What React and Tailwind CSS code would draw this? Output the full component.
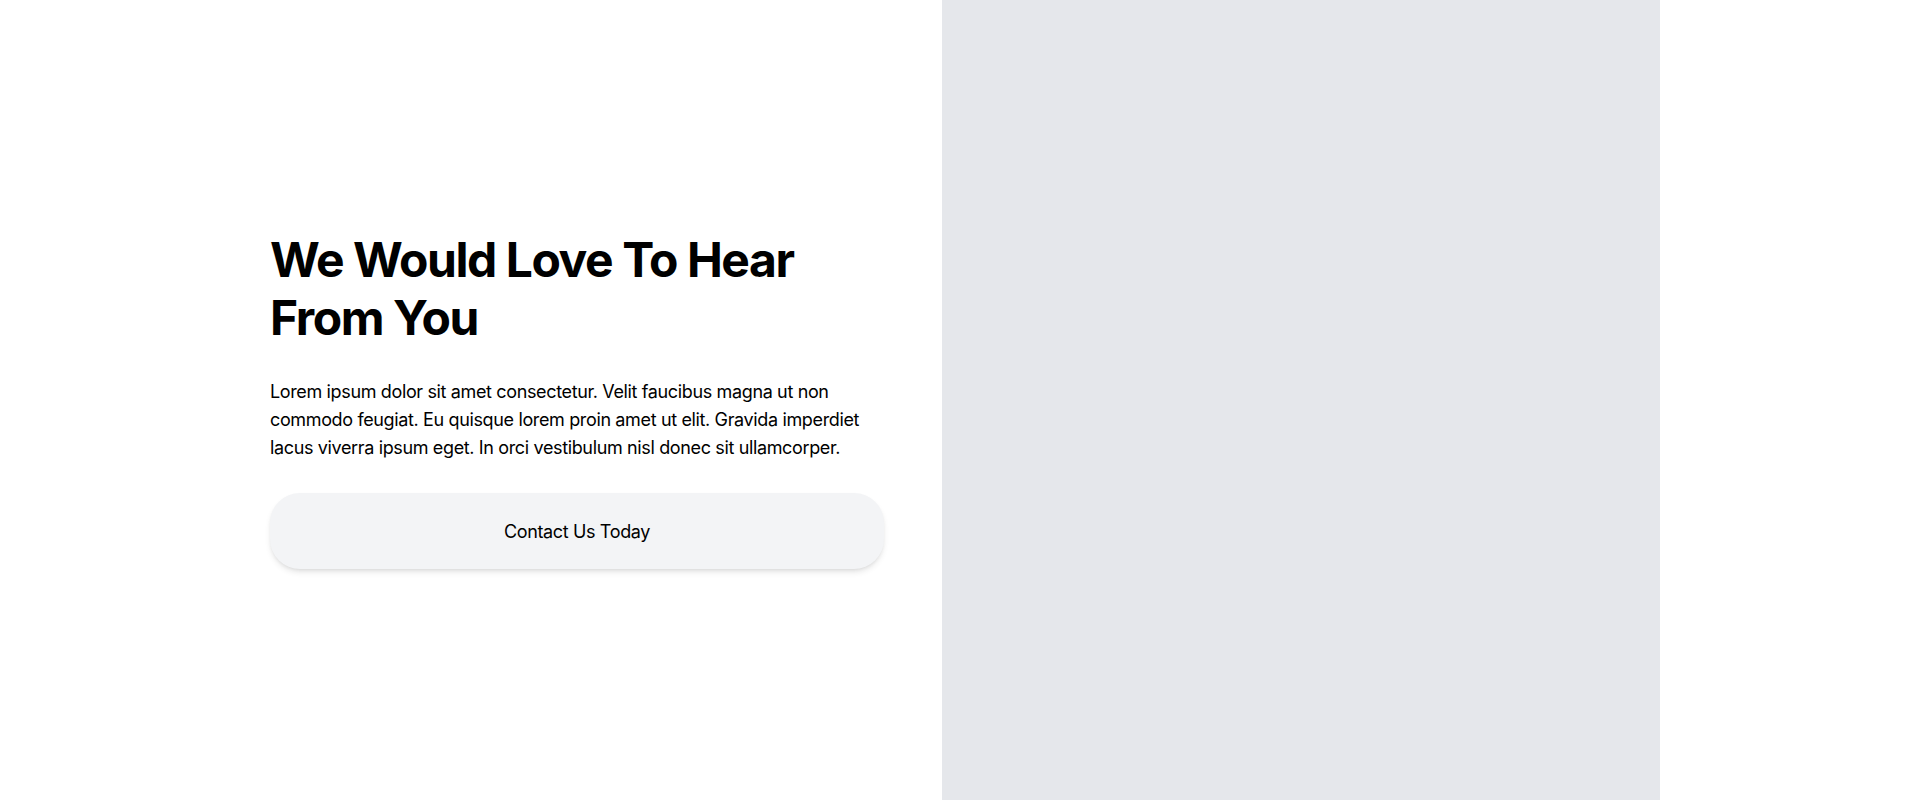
export default function App() {
  return (
    <div
      className="flex h-[800px] w-full bg-white text-black"
      style={{ fontFamily: "Inter, 'Noto Sans', sans-serif" }}
    >
      <div className="ml-[270px] flex w-[614px] flex-col justify-center">
        <h1 className="text-[48px] font-bold leading-[1.2] tracking-[-0.03em]">
          We Would Love To Hear From You
        </h1>
        <p className="mt-[32px] text-[18px] leading-[28px] tracking-[-0.02em]">
          Lorem ipsum dolor sit amet consectetur. Velit faucibus magna ut non
          commodo feugiat. Eu quisque lorem proin amet ut elit. Gravida
          imperdiet lacus viverra ipsum eget. In orci vestibulum nisl donec sit
          ullamcorper.
        </p>
        <button className="mt-[31px] h-[76px] w-full rounded-[30px] bg-gray-100 text-[18px] tracking-[-0.02em] shadow-md">
          Contact Us Today
        </button>
      </div>
      <div className="ml-[58px] h-full w-[718px] bg-gray-200" />
    </div>
  );
}
